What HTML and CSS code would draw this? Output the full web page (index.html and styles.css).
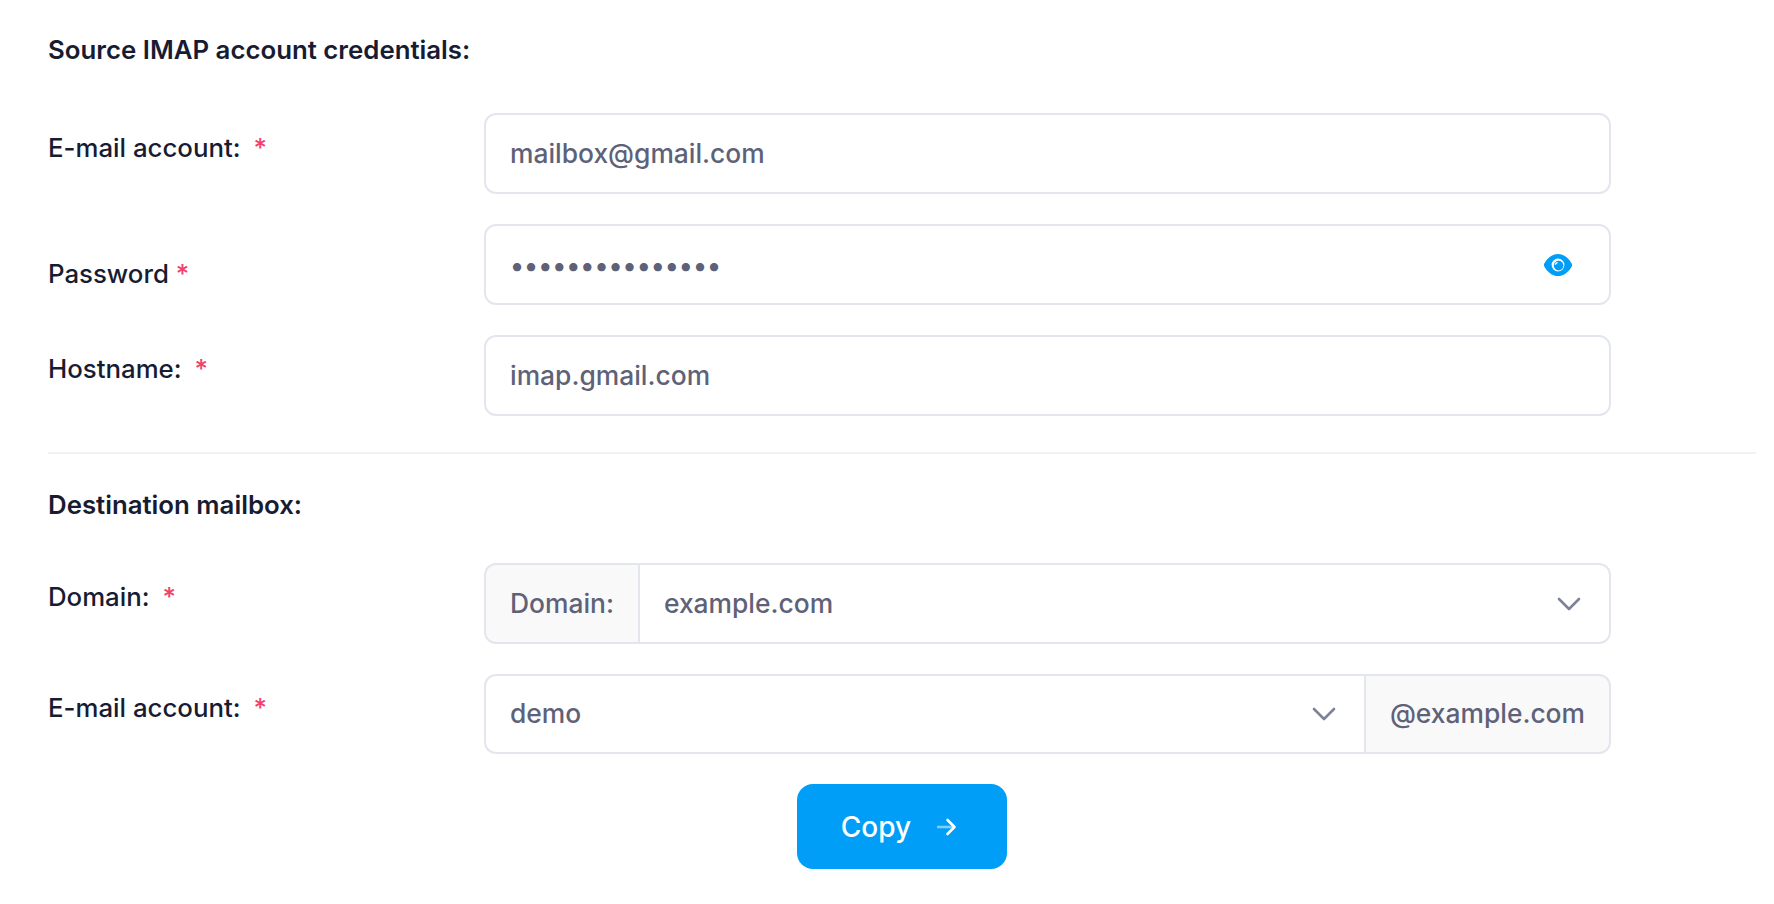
FILE: index.html
```html
<!DOCTYPE html>
<html lang="en">
<head>
    <meta charset="UTF-8">
    <meta name="viewport" content="width=device-width, initial-scale=1.0">
    <title>IMAP Copy</title>
    <link rel="stylesheet" href="styles.css">
</head>
<body>

    <form class="copy-form">
        <!-- Source account -->
        <h3 class="section-title">Source IMAP account credentials:</h3>

        <div class="form-row">
            <label class="form-label label-first" for="src-email">E-mail account: <span class="required">*</span></label>
            <input class="form-input" id="src-email" type="text" value="mailbox@gmail.com">
        </div>

        <div class="form-row">
            <label class="form-label label-low" for="src-pass">Password <span class="required tight">*</span></label>
            <div class="input-wrap">
                <input class="form-input password-input" id="src-pass" type="password" value="mailboxpassword">
                <svg class="eye-icon" viewBox="0 0 28 22">
                    <path d="M14 0C8 0 3.200 4.300.3 9.600a2.900 2.900 0 0 0 0 2.800C3.200 17.700 8 22 14 22s10.800-4.300 13.700-9.600a2.900 2.900 0 0 0 0-2.800C24.800 4.300 20 0 14 0z" fill="#009ef7"/>
                    <circle cx="14" cy="11" r="6.400" fill="#fff"/>
                    <circle cx="14.600" cy="11.600" r="4.800" fill="#009ef7"/>
                    <path d="M13.600 7.800a3.400 3.400 0 0 0-3 3h1.400a2 2 0 0 1 1.600-1.600z" fill="#fff"/>
                </svg>
            </div>
        </div>

        <div class="form-row">
            <label class="form-label" for="src-host">Hostname: <span class="required">*</span></label>
            <input class="form-input" id="src-host" type="text" value="imap.gmail.com">
        </div>

        <div class="separator"></div>

        <!-- Destination -->
        <h3 class="section-title">Destination mailbox:</h3>

        <div class="form-row">
            <label class="form-label" for="dst-domain">Domain: <span class="required">*</span></label>
            <div class="input-group">
                <span class="addon addon-left">Domain:</span>
                <div class="select-wrap">
                    <select class="form-select" id="dst-domain"><option>example.com</option></select>
                    <svg class="chevron chevron-low" viewBox="0 0 24 14"><path d="M2 2l10 10L22 2"/></svg>
                </div>
            </div>
        </div>

        <div class="form-row">
            <label class="form-label" for="dst-email">E-mail account: <span class="required">*</span></label>
            <div class="input-group group-short">
                <div class="select-wrap">
                    <select class="form-select" id="dst-email"><option>demo</option></select>
                    <svg class="chevron chevron-inner" viewBox="0 0 24 14"><path d="M2 2l10 10L22 2"/></svg>
                </div>
                <span class="addon addon-right">@example.com</span>
            </div>
        </div>

        <div class="form-actions">
            <button class="copy-button" type="button">
                Copy
                <svg class="arrow-icon" viewBox="0 0 20 18">
                    <path class="arrow-shaft" d="M1 9h16"/>
                    <path class="arrow-head" d="M10.500 2l7 7-7 7"/>
                </svg>
            </button>
        </div>
    </form>

</body>
</html>
```

FILE: styles.css
```css
* {
    margin: 0;
    padding: 0;
    box-sizing: border-box;
    font-family: Inter, "Liberation Sans", sans-serif;
}

body {
    background-color: #fff;
    color: #181c32;
}

.copy-form {
    padding: 32px 18px 0 48px;
}

.section-title {
    font-size: 25.800px;
    font-weight: 600;
    line-height: 36px;
    margin-bottom: 40px;
}

.section-title:first-child {
    margin-bottom: 45px;
}

.form-row {
    display: grid;
    grid-template-columns: 436px 1127px;
    margin-bottom: 30px;
}

.form-label {
    font-size: 25.800px;
    font-weight: 500;
    line-height: 36px;
    padding-top: 16px;
}

.label-first {
    padding-top: 17px;
}

.label-low {
    padding-top: 32px;
}

.required {
    color: #f1416c;
    margin-left: 6px;
}

.required.tight {
    margin-left: 0;
}

.form-input,
.form-select {
    display: block;
    width: 100%;
    height: 81px;
    border: 2px solid #e4e6ef;
    border-radius: 12px;
    background-color: #fff;
    color: #5e6278;
    font-size: 26.400px;
    font-weight: 450;
    padding: 0 24px 2px;
    outline: none;
}

.password-input {
    padding-bottom: 0;
}

.input-wrap,
.select-wrap {
    position: relative;
}

.eye-icon {
    position: absolute;
    top: 30px;
    right: 39px;
    width: 28px;
    height: 22px;
}

.input-group {
    display: flex;
}

.group-short .form-select,
.group-short .addon {
    height: 80px;
}

.select-wrap {
    flex: 1;
}

.form-select {
    appearance: none;
}

.input-group .select-wrap:last-child .form-select {
    border-left: none;
    border-radius: 0 12px 12px 0;
}

.input-group .select-wrap:first-child .form-select {
    border-right: none;
    border-radius: 12px 0 0 12px;
}

.chevron {
    position: absolute;
    top: 33px;
    right: 30px;
    width: 24px;
    height: 14px;
    fill: none;
    stroke: #7e8299;
    stroke-width: 2.600;
    stroke-linecap: round;
    stroke-linejoin: round;
}

.chevron-low {
    top: 34px;
}

.chevron-inner {
    right: 28px;
}

.addon {
    display: flex;
    align-items: center;
    height: 81px;
    border: 2px solid #e4e6ef;
    background-color: #f9f9f9;
    color: #5e6278;
    font-size: 26.400px;
    font-weight: 450;
    padding: 0 24px 2px;
}

.addon-left {
    border-radius: 12px 0 0 12px;
}

.addon-right {
    border-radius: 0 12px 12px 0;
}

.separator {
    border-top: 2px solid #eff2f5;
    margin: 36px 0 33px;
}

.form-actions {
    display: flex;
    justify-content: center;
}

.copy-button {
    display: flex;
    align-items: center;
    gap: 26px;
    height: 85px;
    padding: 0 50px 0 44px;
    border: none;
    border-radius: 16px;
    background-color: #009ef7;
    color: #fff;
    font-size: 28px;
    font-weight: 450;
}

.arrow-icon {
    width: 20px;
    height: 18px;
    fill: none;
    stroke: #fff;
    stroke-width: 2.600;
    stroke-linecap: round;
    stroke-linejoin: round;
}

.arrow-shaft {
    opacity: 0.5;
}
```
